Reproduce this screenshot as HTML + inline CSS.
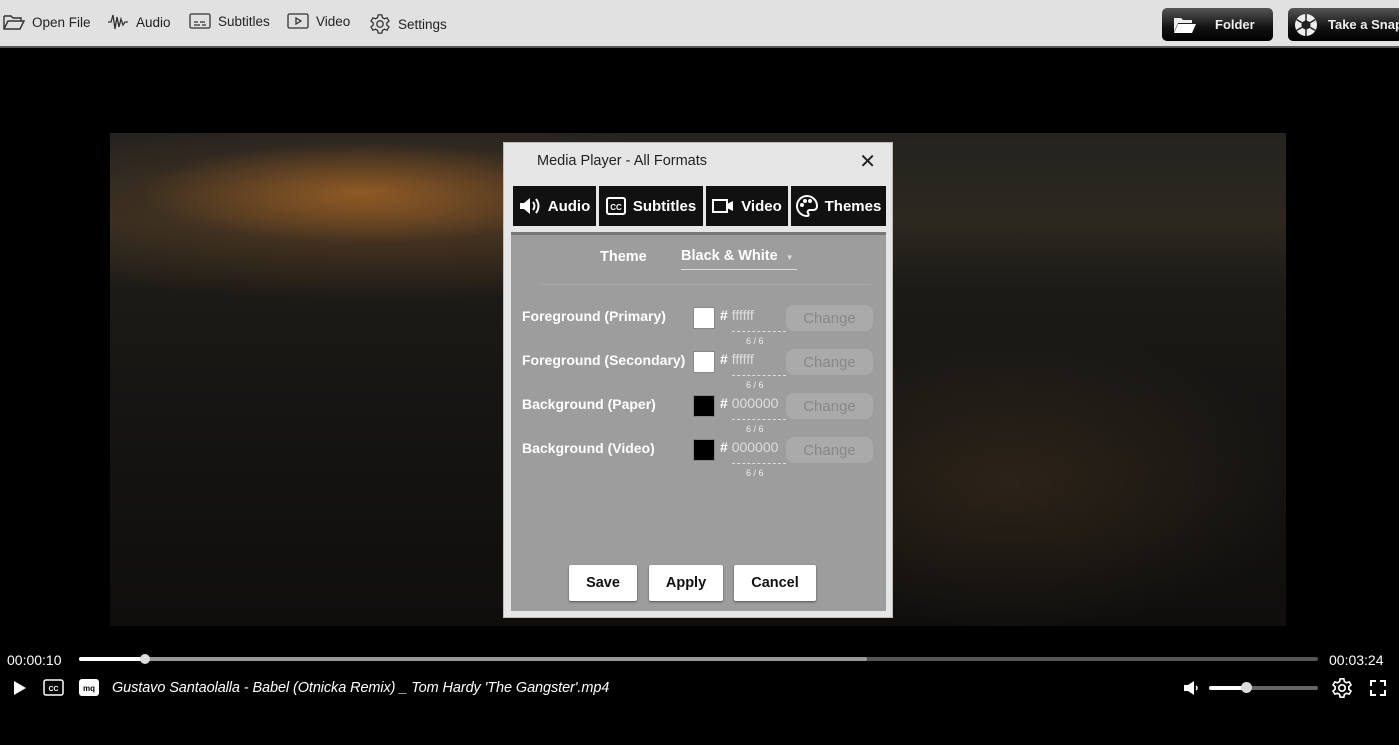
<!DOCTYPE html>
<html><head><meta charset="utf-8"><style>
*{margin:0;padding:0;box-sizing:border-box}
body{width:1399px;height:745px;background:#000;font-family:"Liberation Sans",sans-serif;position:relative;overflow:hidden}
.top{position:absolute;left:0;top:0;width:1399px;height:48px;background:#e1e1e1;border-bottom:2px solid #555}
.ti{position:absolute;top:13px;font-size:13.5px;color:#222;display:flex;align-items:center;gap:7px;white-space:nowrap}
.btn{position:absolute;top:8px;height:33px;border-radius:5px;background:linear-gradient(#555,#111 60%,#000);color:#eee;font-size:13px;font-weight:bold;display:flex;align-items:center;white-space:nowrap}
.video{position:absolute;left:110px;top:133px;width:1176px;height:493px;
background:
radial-gradient(ellipse 220px 50px at 250px 60px,rgba(200,120,40,.55),transparent),
radial-gradient(ellipse 450px 90px at 280px 80px,rgba(120,75,35,.5),transparent),
radial-gradient(ellipse 300px 150px at 900px 350px,rgba(80,60,35,.4),transparent),
linear-gradient(#25231f 0%,#2c2820 18%,#1c1a16 32%,#151412 60%,#0f0e0d 100%)}
.dlg{position:absolute;left:503px;top:142px;width:390px;height:476px;background:#e6e6e6;border:1px solid #bbb}
.title{position:absolute;left:33px;top:10px;font-size:14.5px;color:#222}
.x{position:absolute;right:16px;top:6px;font-size:20px;color:#222}
.tab{position:absolute;top:43px;height:40px;background:#111;color:#fff;font-weight:bold;font-size:15px;display:flex;align-items:center;justify-content:center;gap:7px;white-space:nowrap}
.panel{position:absolute;left:7px;top:89px;width:375px;height:379px;background:#9d9d9d;border-top:3px solid #777}
.lbl{position:absolute;left:11px;color:#fff;font-weight:bold;font-size:14px;white-space:nowrap}
.sw{position:absolute;left:182px;width:22px;height:22px;border:1px solid #888}
.hx{position:absolute;left:209px;color:#fff;font-size:14px;font-weight:bold}
.hx span{color:#ddd;font-weight:normal}
.ul{position:absolute;left:221px;width:54px;border-top:1px dashed #ddd}
.cnt{position:absolute;left:235px;font-size:9px;color:#eee}
.chg{position:absolute;left:275px;width:87px;height:26px;border-radius:8px;background:#aaa;color:#888;font-size:15px;display:flex;align-items:center;justify-content:center}
.b{position:absolute;top:330px;height:36px;background:#fff;border-radius:2px;font-weight:bold;font-size:14.5px;display:flex;align-items:center;justify-content:center;color:#111;box-shadow:0 1px 2px #555}
.w{color:#fff;font-size:14px;position:absolute;white-space:nowrap}
</style></head><body>
<div class="top">
<div class="ti" style="left:3px"><svg width="22" height="18" viewBox="0 0 22 18" fill="none" stroke="#333" stroke-width="1.4"><path d="M1 3h7l2 2h8v3M1 3v13h16l4-8H5L1 16"/></svg>Open File</div>
<div class="ti" style="left:107px"><svg width="22" height="18" viewBox="0 0 22 18" fill="none" stroke="#333" stroke-width="1.3"><path d="M1 9h3l2-7 2 14 2-12 2 10 2-8 2 6 2-3h3"/></svg>Audio</div>
<div class="ti" style="left:189px"><svg width="22" height="16" viewBox="0 0 22 16" fill="none" stroke="#333" stroke-width="1.3"><rect x="1" y="1" width="20" height="14" rx="1.5"/><path d="M5 9h4M11 9h5M5 12h6M13 12h4"/></svg>Subtitles</div>
<div class="ti" style="left:287px"><svg width="22" height="16" viewBox="0 0 22 16" fill="none" stroke="#333" stroke-width="1.3"><rect x="1" y="1" width="20" height="14" rx="1.5"/><path d="M9 5l5 3-5 3z"/></svg>Video</div>
<div class="ti" style="left:369px"><svg width="22" height="22" viewBox="0 0 24 24" fill="none" stroke="#333" stroke-width="1.4"><circle cx="12" cy="12" r="3.5"/><path d="M10 2h4l.6 3 2.3 1.3 2.9-1 2 3.4-2.3 2v2.6l2.3 2-2 3.4-2.9-1-2.3 1.3-.6 3h-4l-.6-3-2.3-1.3-2.9 1-2-3.4 2.3-2v-2.6l-2.3-2 2-3.4 2.9 1L9.4 5z"/></svg>Settings</div>
<div class="btn" style="left:1162px;width:111px;padding-left:11px"><svg width="24" height="18" viewBox="0 0 24 18"><path d="M1 2h7l2 2h9v3H5L1 16z" fill="#eee"/><path d="M5 8h18l-4 9H1z" fill="#fff"/></svg><span style="margin-left:18px">Folder</span></div>
<div class="btn" style="left:1288px;width:115px;padding-left:6px"><svg width="24" height="24" viewBox="0 0 24 24"><circle cx="12" cy="12" r="11" fill="#eee"/><circle cx="12" cy="12" r="4.5" fill="#222"/><path d="M12 1v7M21.5 6.5l-6 3.5M21.5 17.5l-6-3.5M12 23v-7M2.5 17.5l6-3.5M2.5 6.5l6 3.5" stroke="#222" stroke-width="1.5"/></svg><span style="margin-left:10px">Take a Snap</span></div>
</div>
<div class="video"></div>
<div class="dlg">
<div class="title">Media Player - All Formats</div><div class="x">✕</div>
<div class="tab" style="left:9px;width:83px"><svg width="22" height="20" viewBox="0 0 22 20"><path d="M1 7h4l6-5v16l-6-5H1z" fill="#fff"/><path d="M14 6q3 4 0 8M17 3q5 7 0 14" stroke="#fff" stroke-width="2" fill="none"/></svg>Audio</div>
<div class="tab" style="left:95px;width:104px"><svg width="20" height="18" viewBox="0 0 20 18"><rect x="1" y="1" width="18" height="16" rx="2" fill="none" stroke="#fff" stroke-width="2"/><text x="10" y="13" font-size="8" font-weight="bold" fill="#fff" text-anchor="middle" font-family="Liberation Sans">CC</text></svg>Subtitles</div>
<div class="tab" style="left:202px;width:82px"><svg width="22" height="16" viewBox="0 0 22 16"><rect x="1" y="2" width="14" height="12" fill="none" stroke="#fff" stroke-width="2"/><path d="M15 6l6-3v10l-6-3z" fill="#fff"/></svg>Video</div>
<div class="tab" style="left:287px;width:95px"><svg width="22" height="22" viewBox="0 0 22 22" fill="none" stroke="#fff" stroke-width="2"><path d="M11 1a10 10 0 1 0 0 20c2 0 2-2 1-3s0-3 2-3h3c3 0 4-2 4-4C21 5 16 1 11 1z"/><circle cx="6" cy="10" r="1" fill="#fff"/><circle cx="9" cy="6" r="1" fill="#fff"/><circle cx="14" cy="6" r="1" fill="#fff"/></svg>Themes</div>
<div class="panel">
<div style="position:absolute;left:89px;top:14px;color:#fff;font-weight:bold;font-size:14.5px">Theme</div>
<div style="position:absolute;left:170px;top:13px;color:#fff;font-weight:bold;font-size:14.5px;width:116px;border-bottom:1px solid #ddd;padding-bottom:5px;white-space:nowrap">Black &amp; White <span style="font-size:8px;color:#ddd;margin-left:4px">▼</span></div>
<div style="position:absolute;left:30px;top:49px;width:330px;border-top:1px solid #aaa"></div>
<div class="lbl" style="top:73px">Foreground (Primary)</div><div class="sw" style="top:72px;background:#fff"></div><div class="hx" style="top:72px"># <span>ffffff</span></div><div class="ul" style="top:96px"></div><div class="cnt" style="top:101px">6 / 6</div><div class="chg" style="top:70px">Change</div>
<div class="lbl" style="top:117px">Foreground (Secondary)</div><div class="sw" style="top:116px;background:#fff"></div><div class="hx" style="top:116px"># <span>ffffff</span></div><div class="ul" style="top:140px"></div><div class="cnt" style="top:145px">6 / 6</div><div class="chg" style="top:114px">Change</div>
<div class="lbl" style="top:161px">Background (Paper)</div><div class="sw" style="top:160px;background:#000"></div><div class="hx" style="top:160px"># <span>000000</span></div><div class="ul" style="top:184px"></div><div class="cnt" style="top:189px">6 / 6</div><div class="chg" style="top:158px">Change</div>
<div class="lbl" style="top:205px">Background (Video)</div><div class="sw" style="top:204px;background:#000"></div><div class="hx" style="top:204px"># <span>000000</span></div><div class="ul" style="top:228px"></div><div class="cnt" style="top:233px">6 / 6</div><div class="chg" style="top:202px">Change</div>
<div class="b" style="left:58px;width:68px">Save</div>
<div class="b" style="left:138px;width:74px">Apply</div>
<div class="b" style="left:223px;width:82px">Cancel</div>
</div></div>
<div class="w" style="left:7px;top:652px">00:00:10</div>
<div style="position:absolute;left:79px;top:657px;width:1239px;height:4px;background:#555;border-radius:2px"></div>
<div style="position:absolute;left:79px;top:657px;width:788px;height:4px;background:#999;border-radius:2px"></div>
<div style="position:absolute;left:79px;top:657px;width:66px;height:4px;background:#fff;border-radius:2px"></div>
<div style="position:absolute;left:140px;top:654px;width:10px;height:10px;background:#ddd;border-radius:50%"></div>
<div class="w" style="left:1329px;top:652px">00:03:24</div>
<svg style="position:absolute;left:13px;top:680px" width="14" height="16"><path d="M1 1l12 7-12 7z" fill="#fff"/></svg>
<svg style="position:absolute;left:43px;top:679px" width="21" height="17"><rect x="1" y="1" width="19" height="15" rx="2" fill="none" stroke="#fff" stroke-width="1.5"/><text x="10.5" y="12" font-size="7" font-weight="bold" fill="#fff" text-anchor="middle" font-family="Liberation Sans">CC</text></svg>
<svg style="position:absolute;left:79px;top:679px" width="20" height="17"><rect x="0" y="0" width="20" height="17" rx="3" fill="#fff"/><text x="10" y="12" font-size="8" font-weight="bold" fill="#000" text-anchor="middle" font-family="Liberation Sans">mq</text></svg>
<div class="w" style="left:112px;top:680px;font-style:italic;font-size:14.5px;letter-spacing:-0.1px">Gustavo Santaolalla - Babel (Otnicka Remix) _ Tom Hardy 'The Gangster'.mp4</div>
<svg style="position:absolute;left:1183px;top:680px" width="16" height="16"><path d="M1 5h4l6-4v14l-6-4H1z" fill="#fff"/><path d="M13 6q2 2 0 4" stroke="#fff" stroke-width="1.5" fill="none"/></svg>
<div style="position:absolute;left:1209px;top:686px;width:109px;height:4px;background:#666;border-radius:2px"></div>
<div style="position:absolute;left:1209px;top:686px;width:38px;height:4px;background:#fff;border-radius:2px"></div>
<div style="position:absolute;left:1241px;top:682px;width:11px;height:11px;background:#ddd;border-radius:50%"></div>
<svg style="position:absolute;left:1331px;top:677px" width="22" height="22" viewBox="0 0 24 24" fill="none" stroke="#fff" stroke-width="1.8"><circle cx="12" cy="12" r="3.5"/><path d="M10 2h4l.6 3 2.3 1.3 2.9-1 2 3.4-2.3 2v2.6l2.3 2-2 3.4-2.9-1-2.3 1.3-.6 3h-4l-.6-3-2.3-1.3-2.9 1-2-3.4 2.3-2v-2.6l-2.3-2 2-3.4 2.9 1L9.4 5z"/></svg>
<svg style="position:absolute;left:1370px;top:680px" width="16" height="16" fill="none" stroke="#fff" stroke-width="2"><path d="M1 6V1h5M10 1h5v5M15 10v5h-5M6 15H1v-5"/></svg>
</body></html>
